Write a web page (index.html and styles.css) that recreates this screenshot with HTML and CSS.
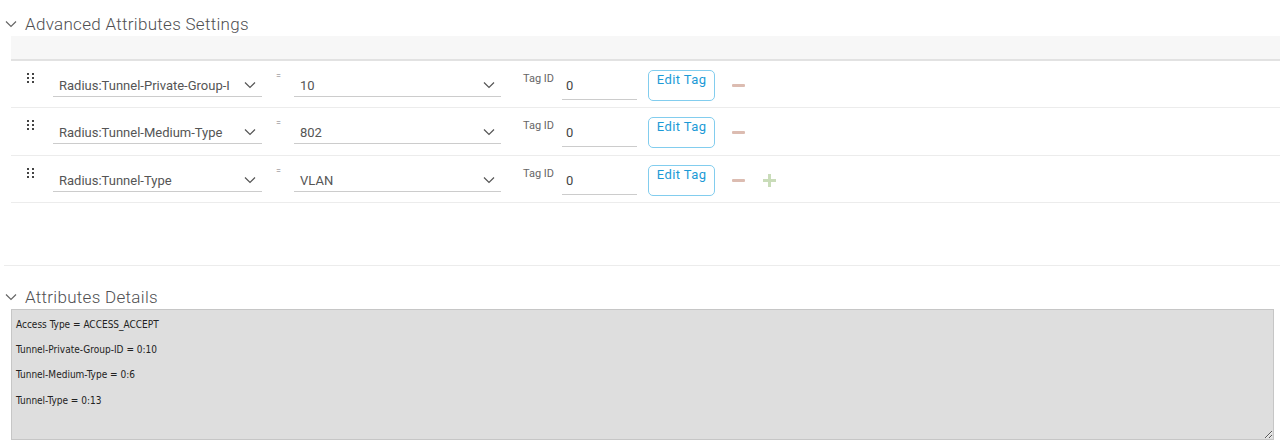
FILE: index.html
```html
<!DOCTYPE html>
<html>
<head>
    <title>Advanced Attributes Settings</title>
    <link rel="stylesheet" href="styles.css">
</head>
<body>
    <div class="section-head">
        <svg class="chev" width="12" height="8" viewBox="0 0 12 8"><path d="M1 1.5 L6 6.5 L11 1.5" fill="none" stroke="#666" stroke-width="1.2"/></svg>
        <span>Advanced Attributes Settings</span>
    </div>
    <div class="attr-table">
        <div class="attr-table-head"></div>

        <div class="attr-row">
            <span class="handle"><i></i><i></i><i></i><i></i><i></i><i></i></span>
            <div class="dd dd-name"><span class="dd-text">Radius:Tunnel-Private-Group-I</span><svg class="dd-chev" width="12" height="8" viewBox="0 0 12 8"><path d="M1 1.5 L6 6.5 L11 1.5" fill="none" stroke="#555" stroke-width="1.2"/></svg></div>
            <span class="eq">=</span>
            <div class="dd dd-value"><span class="dd-text">10</span><svg class="dd-chev" width="12" height="8" viewBox="0 0 12 8"><path d="M1 1.5 L6 6.5 L11 1.5" fill="none" stroke="#555" stroke-width="1.2"/></svg></div>
            <span class="tag-label">Tag ID</span>
            <div class="tag-input">0</div>
            <button class="edit-tag">Edit Tag</button>
            <span class="minus"></span>
        </div>

        <div class="attr-row">
            <span class="handle"><i></i><i></i><i></i><i></i><i></i><i></i></span>
            <div class="dd dd-name"><span class="dd-text">Radius:Tunnel-Medium-Type</span><svg class="dd-chev" width="12" height="8" viewBox="0 0 12 8"><path d="M1 1.5 L6 6.5 L11 1.5" fill="none" stroke="#555" stroke-width="1.2"/></svg></div>
            <span class="eq">=</span>
            <div class="dd dd-value"><span class="dd-text">802</span><svg class="dd-chev" width="12" height="8" viewBox="0 0 12 8"><path d="M1 1.5 L6 6.5 L11 1.5" fill="none" stroke="#555" stroke-width="1.2"/></svg></div>
            <span class="tag-label">Tag ID</span>
            <div class="tag-input">0</div>
            <button class="edit-tag">Edit Tag</button>
            <span class="minus"></span>
        </div>

        <div class="attr-row">
            <span class="handle"><i></i><i></i><i></i><i></i><i></i><i></i></span>
            <div class="dd dd-name"><span class="dd-text">Radius:Tunnel-Type</span><svg class="dd-chev" width="12" height="8" viewBox="0 0 12 8"><path d="M1 1.5 L6 6.5 L11 1.5" fill="none" stroke="#555" stroke-width="1.2"/></svg></div>
            <span class="eq">=</span>
            <div class="dd dd-value"><span class="dd-text">VLAN</span><svg class="dd-chev" width="12" height="8" viewBox="0 0 12 8"><path d="M1 1.5 L6 6.5 L11 1.5" fill="none" stroke="#555" stroke-width="1.2"/></svg></div>
            <span class="tag-label">Tag ID</span>
            <div class="tag-input">0</div>
            <button class="edit-tag">Edit Tag</button>
            <span class="minus"></span>
            <span class="plus"></span>
        </div>
    </div>

    <div class="divider"></div>

    <div class="section-head details-head">
        <svg class="chev" width="12" height="8" viewBox="0 0 12 8"><path d="M1 1.5 L6 6.5 L11 1.5" fill="none" stroke="#666" stroke-width="1.2"/></svg>
        <span>Attributes Details</span>
    </div>
    <textarea class="details" readonly>Access Type = ACCESS_ACCEPT

Tunnel-Private-Group-ID = 0:10

Tunnel-Medium-Type = 0:6

Tunnel-Type = 0:13</textarea>
</body>
</html>
```

FILE: styles.css
```css
body {
    margin: 0;
    font-family: Roboto, "Noto Sans", sans-serif;
    color: #555;
    background: #fff;
}
.section-head {
    display: flex;
    align-items: center;
    height: 24px;
    margin-top: 12px;
    padding-left: 5px;
    font-size: 17px;
    font-weight: 300;
    color: #4f4f52;
    letter-spacing: 0.3px;
}
.section-head .chev {
    margin-right: 8px;
}
.attr-table {
    margin-left: 11px;
}
.attr-table-head {
    height: 23px;
    background: #f7f7f7;
    border-bottom: 2px solid #e2e2e2;
}
.attr-row {
    display: flex;
    align-items: flex-start;
    height: 46px;
    border-bottom: 1px solid #ececec;
}
.attr-row:nth-child(3) {
    height: 47px;
}
.handle {
    display: grid;
    grid-template-columns: 2px 2px;
    column-gap: 3px;
    row-gap: 2px;
    margin-left: 16px;
    margin-top: 12px;
}
.handle i {
    width: 2px;
    height: 2px;
    background: #444;
}
.dd {
    display: flex;
    align-items: center;
    justify-content: space-between;
    box-sizing: border-box;
    height: 21px;
    margin-top: 15px;
    padding: 0 6px 2px;
    border-bottom: 1px solid #ccc;
    font-size: 13px;
    color: #555;
}
.dd-name {
    width: 209px;
    margin-left: 19px;
}
.dd-value {
    width: 207px;
    margin-left: 14px;
}
.eq {
    width: 4px;
    margin-left: 14px;
    margin-top: 10px;
    font-size: 9px;
    color: #777;
}
.tag-label {
    margin-left: 22px;
    margin-top: 11px;
    font-size: 11px;
    color: #666;
}
.tag-input {
    box-sizing: border-box;
    width: 75px;
    height: 24px;
    margin-left: 8px;
    margin-top: 15px;
    padding: 2px 4px 0;
    border-bottom: 1px solid #ccc;
    font-size: 13px;
    color: #444;
}
.edit-tag {
    display: flex;
    justify-content: center;
    align-items: flex-start;
    width: 67px;
    height: 31px;
    margin-left: 11px;
    margin-top: 9px;
    padding: 1px 0 0;
    background: #fff;
    border: 1px solid #82cdee;
    border-radius: 5px;
    font-family: Roboto, "Noto Sans", sans-serif;
    font-size: 13px;
    font-weight: 400;
    letter-spacing: 0.4px;
    line-height: 15px;
    color: #1b9ad6;
}
.minus {
    width: 13px;
    height: 3px;
    margin-left: 17px;
    margin-top: 23px;
    border-radius: 1px;
    background: #dcbcb1;
}
.plus {
    position: relative;
    width: 13px;
    height: 13px;
    margin-left: 18px;
    margin-top: 18px;
}
.plus::before, .plus::after {
    content: "";
    position: absolute;
    background: #c9dcb9;
}
.plus::before {
    left: 0;
    top: 5px;
    width: 13px;
    height: 3px;
}
.plus::after {
    left: 5px;
    top: 0;
    width: 3px;
    height: 13px;
}
.divider {
    margin: 62px 0 0 4px;
    border-top: 1px solid #ececec;
}
.details-head {
    margin-top: 19px;
}
.details {
    display: block;
    box-sizing: border-box;
    width: 1263px;
    height: 131px;
    margin: 0 0 0 11px;
    padding: 9px 4px;
    background: #dedede;
    border: 1px solid #c6c6c6;
    font-family: "DejaVu Sans Condensed", "Liberation Sans", sans-serif;
    font-size: 10px;
    line-height: 12.6px;
    color: #222;
    resize: both;
    outline: none;
}
```
